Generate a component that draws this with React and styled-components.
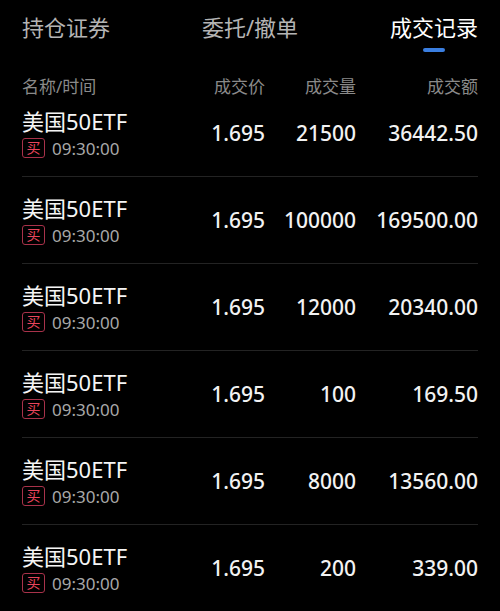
import React from 'react';
import styled, { createGlobalStyle } from 'styled-components';

const GlobalStyle = createGlobalStyle`
  html, body {
    margin: 0;
    padding: 0;
    background: #000;
  }
  body {
    font-family: "Noto Sans", "Noto Sans CJK SC", sans-serif;
    color: #f2f2f2;
  }
`;

const Page = styled.div`
  width: 500px;
  height: 611px;
  overflow: hidden;
  background: #000;
  padding: 0 22px;
  box-sizing: border-box;
`;

const Tabs = styled.div`
  display: flex;
  justify-content: space-between;
  padding-top: 12px;
`;

const Tab = styled.div`
  display: flex;
  flex-direction: column;
  align-items: center;
  font-size: 22px;
  line-height: 30px;
  color: ${(p) => (p.$active ? '#ffffff' : '#b4b4b4')};
`;

const Indicator = styled.div`
  width: 22px;
  height: 4px;
  margin-top: 6px;
  border-radius: 2px;
  background: ${(p) => (p.$on ? '#3a7ee0' : 'transparent')};
`;

const Grid = styled.div`
  display: grid;
  grid-template-columns: 1fr 90px 91px 122px;
  align-items: center;
`;

const Header = styled(Grid)`
  margin-top: 24px;
  margin-bottom: -8px;
  font-size: 17px;
  line-height: 22px;
  color: #8a8a8a;
`;

const HeadCell = styled.div`
  text-align: ${(p) => (p.$left ? 'left' : 'right')};
`;

const Row = styled(Grid)`
  height: 86px;
  border-bottom: 1px solid #232323;
`;

const NameCell = styled.div`
  display: flex;
  flex-direction: column;
`;

const Name = styled.div`
  font-size: 22px;
  line-height: 26px;
  color: #f5f5f5;
  margin-bottom: 4px;
`;

const Meta = styled.div`
  display: flex;
  align-items: center;
  height: 20px;
`;

const Badge = styled.span`
  display: inline-flex;
  align-items: center;
  justify-content: center;
  width: 23px;
  height: 20px;
  box-sizing: border-box;
  border: 1px solid #a8324a;
  border-radius: 3px;
  color: #e8455c;
  font-size: 14px;
  line-height: 1;
`;

const Time = styled.span`
  margin-left: 7px;
  font-size: 17px;
  color: #a8a8a8;
`;

const Num = styled.div`
  text-align: right;
  font-size: 21px;
  font-weight: 500;
  color: #f2f2f2;
`;

const trades = [
  { price: '1.695', vol: '21500', amount: '36442.50' },
  { price: '1.695', vol: '100000', amount: '169500.00' },
  { price: '1.695', vol: '12000', amount: '20340.00' },
  { price: '1.695', vol: '100', amount: '169.50' },
  { price: '1.695', vol: '8000', amount: '13560.00' },
  { price: '1.695', vol: '200', amount: '339.00' },
];

const tabs = ['持仓证券', '委托/撤单', '成交记录'];

export default function App() {
  return (
    <Page>
      <GlobalStyle />
      <Tabs>
        {tabs.map((t, i) => (
          <Tab key={t} $active={i === 2}>
            {t}
            <Indicator $on={i === 2} />
          </Tab>
        ))}
      </Tabs>
      <Header>
        <HeadCell $left>名称/时间</HeadCell>
        <HeadCell>成交价</HeadCell>
        <HeadCell>成交量</HeadCell>
        <HeadCell>成交额</HeadCell>
      </Header>
      {trades.map((r, i) => (
        <Row key={i}>
          <NameCell>
            <Name>美国50ETF</Name>
            <Meta>
              <Badge>买</Badge>
              <Time>09:30:00</Time>
            </Meta>
          </NameCell>
          <Num>{r.price}</Num>
          <Num>{r.vol}</Num>
          <Num>{r.amount}</Num>
        </Row>
      ))}
    </Page>
  );
}
